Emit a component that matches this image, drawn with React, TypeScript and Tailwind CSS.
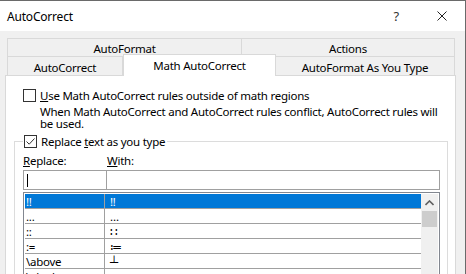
const rows = [
  { key: "!!", value: "‼" },
  { key: "...", value: "…" },
  { key: "::", value: "∷" },
  { key: ":=", value: "≔" },
  { key: "\\above", value: "┴" },
  { key: "\\aleph", value: "ℵ" },
];

function CheckBox({ checked }: { checked?: boolean }) {
  return (
    <span className="flex h-[13px] w-[13px] shrink-0 items-center justify-center border border-[#333333] bg-white">
      {checked && (
        <svg width="11" height="11" viewBox="0 0 11 11">
          <path d="M1.5 5.5 L4.2 8.2 L9.5 2.5" fill="none" stroke="#333333" strokeWidth="1" />
        </svg>
      )}
    </span>
  );
}

export default function App() {
  return (
    <div
      className="relative h-[274px] w-[466px] overflow-hidden border-r border-t border-[#6a6a6a] bg-[#f0f0f0] text-[11.5px] leading-[15px] tracking-[-0.25px] text-black"
      style={{ fontFamily: '"Noto Sans", "Liberation Sans", sans-serif' }}
    >
      <div className="flex h-[30px] items-center bg-white pl-[7px] pr-[18px]">
        <span className="text-[12px] tracking-[-0.2px]">AutoCorrect</span>
        <span className="ml-auto mr-[38px] text-[13px] text-[#333]">?</span>
        <svg width="10" height="10" viewBox="0 0 10 10">
          <path d="M0.5 0.5 L9.5 9.5 M9.5 0.5 L0.5 9.5" stroke="#222" strokeWidth="1" />
        </svg>
      </div>

      <div className="flex pl-[5px] pt-[7px]" style={{ height: 243 }}>
        <div className="flex w-[451px] flex-col">
          {/* tabs */}
          <div className="ml-[2px] flex h-[19px] w-[448px]">
            <div className="flex w-[235px] items-center justify-center border-x border-t border-[#d9d9d9] pt-[2px]">AutoFormat</div>
            <div className="flex flex-1 items-center justify-center border-r border-t border-[#d9d9d9] pt-[2px]">Actions</div>
          </div>
          <div className="ml-[2px] flex h-[19px] w-[448px] items-end">
            <div className="flex h-[19px] w-[116px] items-center justify-center border-x border-t border-[#d9d9d9] pt-[2px]">AutoCorrect</div>
            <div className="relative z-10 -mb-px flex h-[22px] w-[153px] items-center justify-center border-x border-t border-[#d9d9d9] bg-white pb-px">
              Math AutoCorrect
            </div>
            <div className="flex h-[19px] flex-1 items-center justify-center border-r border-t border-[#d9d9d9] pt-[2px]">AutoFormat As You Type</div>
          </div>

          {/* panel */}
          <div className="flex-1 border border-[#d9d9d9] bg-white pl-[17px] pt-[12px]">
            <div className="flex h-[14px] items-center gap-[4px]">
              <CheckBox />
              <span className="pt-px">
                <span className="underline">U</span>se Math AutoCorrect rules outside of math regions
              </span>
            </div>
            <p className="ml-[17px] mt-[4px] w-[403px] leading-[12px]">
              When Math AutoCorrect and AutoCorrect rules conflict, AutoCorrect rules will be used.
            </p>

            <fieldset className="-ml-[9px] mt-[3px] w-[434px] border border-[#dcdcdc] pl-[8px] pr-[7px]">
              <legend className="flex items-center gap-[4px] pl-[1px] pr-[2px]">
                <CheckBox checked />
                <span className="pt-px">
                  Replace <span className="underline">t</span>ext as you type
                </span>
              </legend>
              <div className="mt-[4px] flex">
                <span className="w-[84px]">
                  <span className="underline">R</span>eplace:
                </span>
                <span>
                  <span className="underline">W</span>ith:
                </span>
              </div>
              <div className="mt-[2px] flex h-[20px]">
                <div className="flex w-[84px] items-center border border-[#a0a0a0] pl-[3px]">
                  <span className="h-[13px] w-px bg-black" />
                </div>
                <div className="flex-1 border-y border-r border-[#a0a0a0]" />
              </div>

              <div className="mt-[2px] flex h-[100px] border border-[#828790] p-px">
                <div className="flex flex-1 flex-col">
                  {rows.map((r, i) => (
                    <div
                      key={r.key}
                      className={
                        "flex h-[15px] shrink-0 border-b border-[#a0a0a0] " +
                        (i === 0 ? "bg-[#0078d7] text-white" : "")
                      }
                    >
                      <span className="w-[80px] border-r border-[#a0a0a0] pl-px pt-px leading-[13px]">{r.key}</span>
                      <span className="pl-[5px] pt-px leading-[13px]">{r.value}</span>
                    </div>
                  ))}
                </div>
                <div className="flex w-[17px] flex-col bg-[#f0f0f0]">
                  <div className="flex h-[17px] items-center justify-center">
                    <svg width="9" height="6" viewBox="0 0 9 6">
                      <path d="M0.5 5 L4.5 1 L8.5 5" fill="none" stroke="#606060" strokeWidth="1.6" />
                    </svg>
                  </div>
                  <div className="mx-px h-[16px] bg-[#cdcdcd]" />
                </div>
              </div>
            </fieldset>
          </div>
        </div>
      </div>
    </div>
  );
}
